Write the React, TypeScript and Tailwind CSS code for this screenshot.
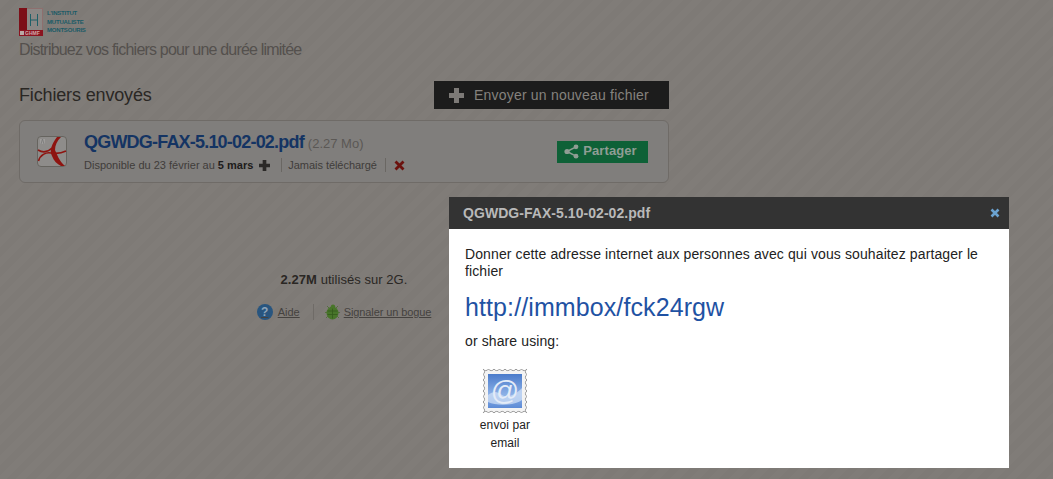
import React from 'react'

const Logo = () => (
  <div className="flex h-[36px] items-start gap-[4px] pt-[8px]">
    <svg width="24" height="28" viewBox="0 0 24 28">
      <rect x="0" y="0" width="24" height="28" fill="#8d6f6e" />
      <rect x="1" y="1" width="22" height="21" fill="#8b8785" />
      <rect x="0" y="0" width="8" height="23" fill="#7c0f18" />
      <rect x="0" y="22" width="24" height="6" fill="#8a1420" />
      <rect x="1" y="23" width="4" height="4" fill="#b9aaa6" />
      <text x="6" y="27" fontSize="5" fontWeight="700" fill="#cfa9a9" fontFamily="Liberation Sans, sans-serif">
        GHMF
      </text>
      <path d="M11.5 6v12M18.5 6v12M11.5 12h7" stroke="#1f6068" strokeWidth="1" fill="none" />
    </svg>
    <div className="mt-[1px] text-[6px] leading-[8.5px] font-bold tracking-[-0.2px] text-[#1b5a66]">
      <div>L'INSTITUT</div>
      <div>MUTUALISTE</div>
      <div>MONTSOURIS</div>
    </div>
  </div>
)

const PdfIcon = () => (
  <svg width="30" height="31" viewBox="0 0 30 31" className="shrink-0">
    <rect x="0.5" y="0.5" width="29" height="30" rx="3.5" fill="#8e8c8a" stroke="#66645f" />
    <path d="M3 3h5v5H3z" fill="#9f9d9b" />
    <path d="M4 8l1.5-5L7 8" stroke="#777" strokeWidth="0.8" fill="none" />
    <path d="M1 14C6 17 11 16 15 12" stroke="#8e1410" strokeWidth="1.6" fill="none" />
    <path d="M1.5 25C3 19 9 16 14 17c6 1 11 0 15-2" stroke="#8e1410" strokeWidth="1.6" fill="none" />
    <path d="M20 1C15 8 12 14 15 20c2 5 5 8 9 10h4C22 25 20 18 18 14c0-5 2-9 6-13z" fill="#8e1410" />
  </svg>
)

const ShareIcon = () => (
  <svg width="15" height="15" viewBox="0 0 15 15" fill="#8f9d94">
    <circle cx="3" cy="7.5" r="2.6" />
    <circle cx="12" cy="2.8" r="2.4" />
    <circle cx="12" cy="12.2" r="2.4" />
    <path d="M3 7.5 12 2.8M3 7.5l9 4.7" stroke="#8f9d94" strokeWidth="1.5" />
  </svg>
)

const HelpIcon = () => (
  <div className="flex h-[16px] w-[16px] items-center justify-center rounded-full bg-[#28557f] text-[12px] leading-none font-bold text-[#8ea4b8]">
    ?
  </div>
)

const BugIcon = () => (
  <svg width="18" height="18" viewBox="0 0 18 18">
    <path d="M4 3l3 3M15 3l-3 3M2 9.500h3M14 9.500h3M3 15l3-3M16 15l-3-3" stroke="#55703f" strokeWidth="1" />
    <ellipse cx="9.500" cy="10" rx="6" ry="6.500" fill="#48752a" />
    <path d="M4.500 8h10M4.500 11.500h10M9.500 4.500v11" stroke="#34591c" strokeWidth="0.8" />
    <circle cx="10" cy="3.600" r="2.200" fill="#48752a" />
  </svg>
)

// perforated edge of the stamp: shallow bites along each side
const stampEdge = () => {
  const bites = 8
  const step = 44 / bites
  const arc = (dx: number, dy: number) => `a3.16 3.16 0 0 0 ${dx} ${dy}`
  let d = 'M1 1'
  for (let i = 0; i < bites; i++) d += arc(step, 0)
  for (let i = 0; i < bites; i++) d += arc(0, step)
  for (let i = 0; i < bites; i++) d += arc(-step, 0)
  for (let i = 0; i < bites; i++) d += arc(0, -step)
  return d + 'z'
}

const StampIcon = () => (
  <svg width="46" height="46" viewBox="0 0 46 46">
    <defs>
      <linearGradient id="sky" x1="0" y1="0" x2="0" y2="1">
        <stop offset="0" stopColor="#4a7bcb" />
        <stop offset="0.6" stopColor="#8cb0e6" />
        <stop offset="1" stopColor="#5d8bd6" />
      </linearGradient>
    </defs>
    <path d={stampEdge()} fill="#f3f3f3" stroke="#9a9a9a" strokeWidth="1" />
    <rect x="6" y="6" width="34" height="34" fill="url(#sky)" />
    <path d="M6 27c6-5 10-3 14 0s14 0 20-7v12c-8 6-26 6-34 2z" fill="#cfdff5" opacity="0.75" />
    <text x="23" y="32" textAnchor="middle" fontSize="28" fill="#e4ecf8" fontFamily="Liberation Sans, sans-serif">
      @
    </text>
  </svg>
)

const App = () => {
  return (
    <div className="relative h-[479px] w-[1053px] overflow-hidden bg-[repeating-linear-gradient(135deg,#807c78_0px,#807c78_7px,#7e7a76_7px,#7e7a76_14px)] font-['Liberation_Sans',sans-serif]">
      <div className="w-[669px] pl-[19px]">
        <Logo />
        <p className="mt-[4px] text-[16px] leading-[20px] tracking-[-0.8px] text-[#54504d]">
          Distribuez vos fichiers pour une durée limitée
        </p>

        <div className="mt-[21px] flex items-center justify-between">
          <h2 className="text-[18px] leading-[28px] tracking-[-0.15px] text-[#2a2724]">Fichiers envoyés</h2>
          <button className="flex h-[28px] w-[235px] items-center bg-[#1c1c1c] pl-[15px] text-[14px] tracking-[0.2px] text-[#85827e]">
            <svg width="15" height="15" viewBox="0 0 15 15" className="mr-[10px]" fill="#7d7a77">
              <path d="M5 0h5v5h5v5h-5v5H5v-5H0V5h5z" />
            </svg>
            Envoyer un nouveau fichier
          </button>
        </div>

        <div className="mt-[11px] flex h-[63px] items-center rounded-[6px] border border-[#6f6b67] bg-[#807e7c] pl-[17px] pr-[20px]">
          <PdfIcon />
          <div className="ml-[17px] flex-1">
            <div className="flex items-baseline gap-[4px] leading-[22px]">
              <span className="text-[18px] font-bold tracking-[-0.8px] text-[#143463]">QGWDG-FAX-5.10-02-02.pdf</span>
              <span className="text-[13px] text-[#5b5855]">(2.27 Mo)</span>
            </div>
            <div className="mt-[3px] flex items-center text-[11px] leading-[14px] text-[#3f3c3a]">
              <span>Disponible du 23 février au</span>
              <span className="ml-[3px] font-bold text-[#1d1b1a]">5 mars</span>
              <svg width="11" height="11" viewBox="0 0 15 15" className="ml-[6px]" fill="#2b2927">
                <path d="M5 0h5v5h5v5h-5v5H5v-5H0V5h5z" />
              </svg>
              <span className="ml-[11px] border-l border-[#6a6763] pl-[6px] tracking-[-0.05px]">Jamais téléchargé</span>
              <span className="ml-[8px] border-l border-[#6a6763] pl-[8px]">
                <svg width="11" height="11" viewBox="0 0 11 11" className="my-[1.5px]">
                  <path d="M1.5 1.5l8 8M9.5 1.5l-8 8" stroke="#6b120e" strokeWidth="2.8" />
                </svg>
              </span>
            </div>
          </div>
          <button className="flex h-[22px] w-[91px] items-center justify-center gap-[4px] bg-[#0e6137] pr-[4px] pb-[1px] text-[13px] font-bold text-[#8f9d94]">
            <ShareIcon />
            <span className="tracking-[0.1px]">Partager</span>
          </button>
        </div>

        <p className="mt-[89px] text-center text-[13px] leading-[16px] tracking-[0.05px] text-[#2a2724]">
          <b>2.27M</b> utilisés sur 2G.
        </p>
        <div className="mt-[15px] flex items-center justify-center text-[11px] text-[#45423f] underline">
          <HelpIcon />
          <span className="ml-[5px]">Aide</span>
          <span className="ml-[13px] mr-[9px] h-[16px] border-l border-[#6f6b67]" />
          <BugIcon />
          <span className="ml-[3px] tracking-[-0.1px]">Signaler un bogue</span>
        </div>
      </div>

      <div className="absolute left-[449px] top-[197px] h-[271px] w-[560px] bg-white">
        <div className="flex h-[32px] items-center justify-between bg-[#333333] pl-[14px] pr-[9px] text-[14px] font-bold tracking-[0.05px] text-[#b9b9b9]">
          <span>QGWDG-FAX-5.10-02-02.pdf</span>
          <svg width="10" height="10" viewBox="0 0 10 10">
            <path d="M1.5 1.5l7 7M8.500 1.5l-7 7" stroke="#6ba3d1" strokeWidth="2.6" />
          </svg>
        </div>
        <div className="px-[16px] pt-[17px] text-[14px] leading-[17px] tracking-[0.11px] text-[#222222]">
          <p>Donner cette adresse internet aux personnes avec qui vous souhaitez partager le fichier</p>
          <a className="mt-[12px] block text-[25px] leading-[30px] tracking-[0.1px] text-[#1f52a3]">http://immbox/fck24rgw</a>
          <p className="mt-[11px]">or share using:</p>
          <div className="mt-[18px] flex w-[80px] flex-col items-center text-center text-[12px] leading-[18px]">
            <StampIcon />
            <span className="mt-[2px]">envoi par<br />email</span>
          </div>
        </div>
      </div>
    </div>
  )
}

export default App
